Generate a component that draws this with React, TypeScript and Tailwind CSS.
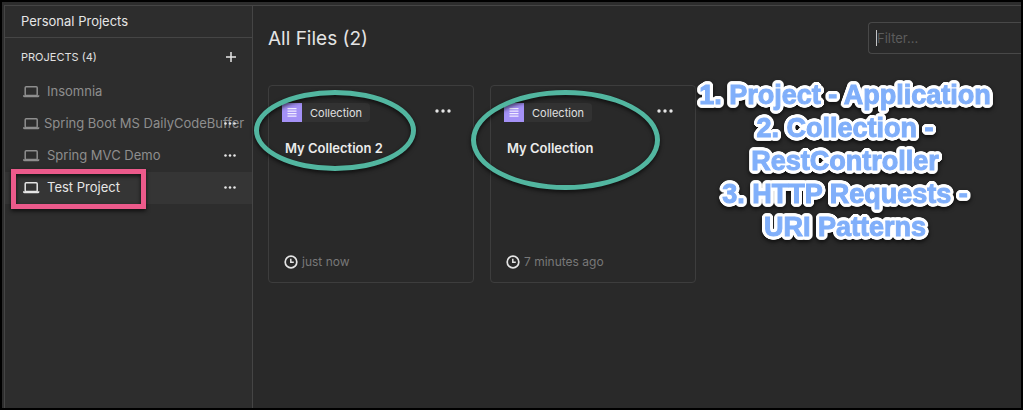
const projects = [
  { name: 'Insomnia', menu: false, active: false },
  { name: 'Spring Boot MS DailyCodeBuffer', menu: true, active: false, tight: true },
  { name: 'Spring MVC Demo', menu: true, active: false },
  { name: 'Test Project', menu: true, active: true },
];

const files = [
  { name: 'My Collection 2', time: 'just now' },
  { name: 'My Collection', time: '7 minutes ago' },
];

const notes = ['1. Project - Application', '2. Collection -', 'RestController', '3. HTTP Requests -', 'URI Patterns'];

function Laptop() {
  return (
    <svg viewBox="0 1 17 13" className="h-[13px] w-[17px] shrink-0" fill="none" aria-hidden="true">
      <rect x="2.2" y="1.8" width="12" height="8.8" rx="1" stroke="currentColor" strokeWidth="1.5" />
      <path d="M0 10.3h16.4v0.5a1.5 1.5 0 0 1-1.5 1.5H1.5A1.5 1.5 0 0 1 0 10.8z" fill="currentColor" />
    </svg>
  );
}

function Dots({ large = false }: { large?: boolean }) {
  return (
    <svg viewBox="0 0 16 4" className={large ? 'h-1 w-4' : 'h-[3px] w-3'} fill="currentColor" aria-hidden="true">
      <circle cx="2" cy="2" r="1.7" />
      <circle cx="8" cy="2" r="1.7" />
      <circle cx="14" cy="2" r="1.7" />
    </svg>
  );
}

function Clock() {
  return (
    <svg viewBox="0 0 14 14" className="size-[14px]" fill="none" stroke="#e4e4e4" strokeWidth="1.7" aria-hidden="true">
      <circle cx="7" cy="7" r="5.8" />
      <path d="M6.8 3.8v3.4h3" strokeWidth="1.5" />
    </svg>
  );
}

function Ring({ className }: { className: string }) {
  return (
    <div
      className={`pointer-events-none absolute rounded-[50%] border-[5px] border-[#52b6a0] drop-shadow-[0_2px_2px_rgba(0,0,0,0.7)] ${className}`}
    />
  );
}

export default function App() {
  return (
    <div className="relative flex min-h-screen overflow-hidden border-2 border-black bg-[#2d2d2d] pt-[3px] pl-[2px] font-['Inter','Liberation_Sans',sans-serif] text-[#e0e0e0]">
      <aside className="w-[249px] shrink-0 border border-b-0 border-[#454545] bg-[#2d2d2d]">
        <h2 className="flex h-8 items-center border-b border-[#454545] px-4 text-[13px] font-normal text-[#e6e6e6]">
          Personal Projects
        </h2>
        <div className="flex h-[38px] items-center justify-between pr-4 pl-4">
          <span className="text-[11px]">PROJECTS (4)</span>
          <button type="button" aria-label="Add project">
            <svg viewBox="0 0 10 10" className="size-[10px]" stroke="#e6e6e6" strokeWidth="1.5" aria-hidden="true">
              <path d="M5 0v10M0 5h10" />
            </svg>
          </button>
        </div>
        <ul>
          {projects.map((p) => (
            <li
              key={p.name}
              className={`flex h-8 items-center justify-between pr-4 pl-[18px] text-[13px] ${p.active ? 'bg-[#353535] text-[#e6e6e6]' : 'text-[#8e8e8e]'}`}
            >
              <a href="#" className={`flex w-0 grow items-center whitespace-nowrap ${p.tight ? 'gap-1' : 'gap-[7px]'}`}>
                <Laptop />
                {p.name}
              </a>
              {p.menu && (
                <button type="button" aria-label={`${p.name} actions`} className="flex pb-px text-[#e6e6e6]">
                  <Dots />
                </button>
              )}
            </li>
          ))}
        </ul>
      </aside>

      <main className="min-w-0 grow border-t border-[#454545] bg-[#292929] pl-[15px]">
        <header className="flex items-center justify-between pt-4">
          <h1 className="pt-px text-[19px] leading-7 font-normal text-[#e4e4e4]">All Files (2)</h1>
          <div className="relative w-[153px]">
            <input
              aria-label="Filter"
              placeholder="Filter..."
              className="block h-8 w-full rounded-l border border-r-0 border-[#484848] bg-transparent px-2 text-[13px] outline-none placeholder:text-[#5c5c5c]"
            />
            <span className="absolute top-2 left-2 h-4 w-px bg-[#c4c4c4]" />
          </div>
        </header>
        <div className="mt-[31px] flex flex-wrap gap-4">
          {files.map((f) => (
            <article key={f.name} className="flex h-[198px] w-[206px] flex-col rounded border border-[#3d3d3d] pr-4 pl-[13px]">
              <div className="mt-[17px] flex items-start justify-between pr-[6px]">
                <div className="flex h-[19px] items-center rounded-sm bg-[#323232] pr-2">
                  <span className="flex h-[19px] w-5 items-center justify-center bg-[#a491f6]">
                    <svg viewBox="0 0 10 9" className="h-[9px] w-[10px]" stroke="#f0ecff" strokeWidth="1.3" aria-hidden="true">
                      <path d="M0.5 0.7h9M0.5 3.2h9M0.5 5.7h9M0.5 8.2h9" />
                    </svg>
                  </span>
                  <span className="pl-2 text-[11px] leading-4">Collection</span>
                </div>
                <button type="button" aria-label={`${f.name} actions`} className="mt-[6px] flex text-[#e6e6e6]">
                  <Dots large />
                </button>
              </div>
              <h3 className="mt-4 pl-[3px] text-[13px] leading-5 font-semibold text-[#ececec]">{f.name}</h3>
              <p className="mt-auto mb-[10px] flex items-center gap-1 pl-[2px] text-xs leading-5 text-[#787878]">
                <Clock />
                {f.time}
              </p>
            </article>
          ))}
        </div>
      </main>

      <Ring className="top-[88px] left-[252px] h-[81px] w-[162px]" />
      <Ring className="top-[88px] left-[469px] h-[100px] w-[189px]" />
      <div className="pointer-events-none absolute top-[167px] left-[9px] h-10 w-[135px] border-[5px] border-[#ec5a8b] drop-shadow-[0_2px_2px_rgba(0,0,0,0.7)]" />
      <div className="pointer-events-none absolute top-[77px] left-[683px] w-[320px] text-center font-['Liberation_Sans',sans-serif] text-[27px] leading-[33px] font-bold text-[#80affa] [-webkit-text-stroke:1px_#80affa] [filter:drop-shadow(1px_1px_0_white)_drop-shadow(-1px_-1px_0_white)_drop-shadow(1px_-1px_0_white)_drop-shadow(-1px_1px_0_white)_drop-shadow(1px_0_0_white)_drop-shadow(-1px_0_0_white)_drop-shadow(0_1px_0_white)_drop-shadow(0_-1px_0_white)_drop-shadow(0_2px_2px_rgba(0,0,0,0.7))]">
        {notes.map((line) => (
          <div key={line} className="whitespace-nowrap">
            {line}
          </div>
        ))}
      </div>
    </div>
  );
}
